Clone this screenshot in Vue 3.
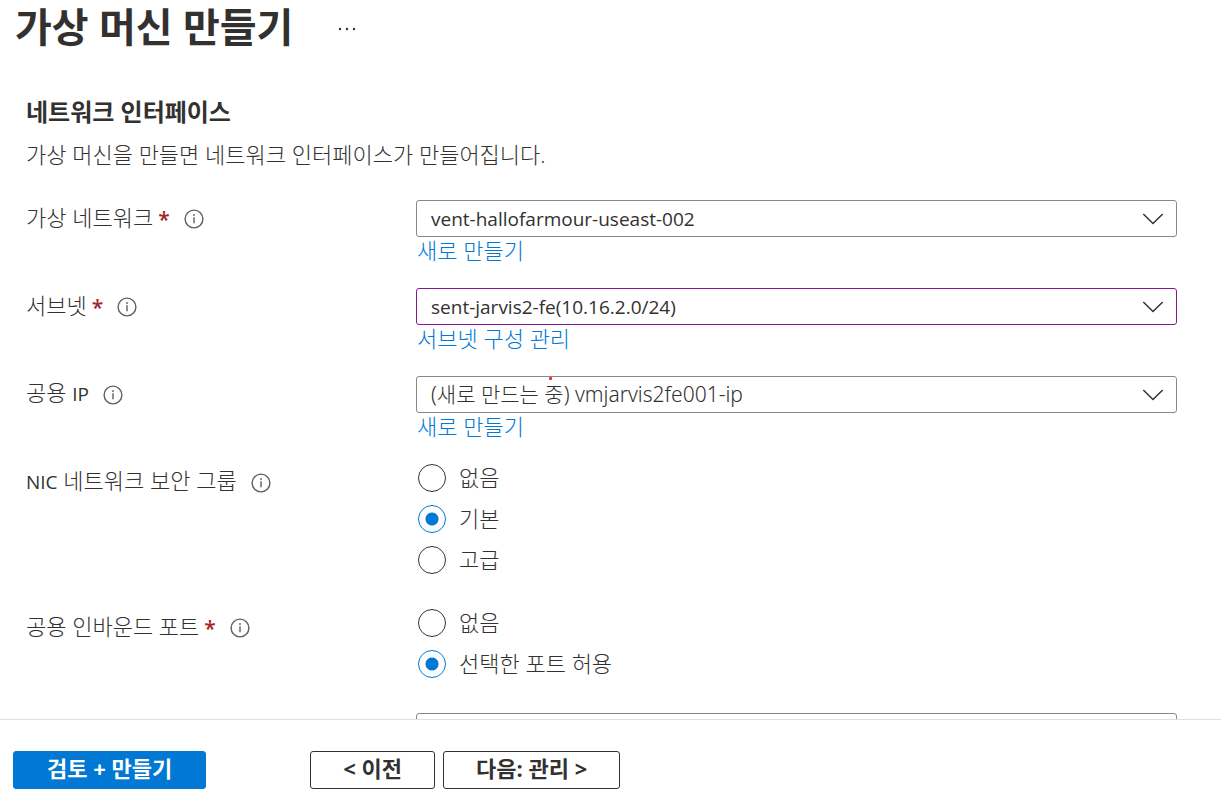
<script setup>
import { ref } from 'vue'

const dropdowns = [
  { id: 'vnet', label: '가상 네트워크', required: true, value: 'vent-hallofarmour-useast-002', link: '새로 만들기' },
  { id: 'subnet', label: '서브넷', required: true, value: 'sent-jarvis2-fe(10.16.2.0/24)', link: '서브넷 구성 관리', edited: true },
  { id: 'public-ip', label: '공용', suffix: 'IP', value: '(새로 만드는 중) vmjarvis2fe001-ip', link: '새로 만들기', marked: true },
]

const radioGroups = ref([
  { id: 'nsg', prefix: 'NIC', label: '네트워크 보안 그룹', options: ['없음', '기본', '고급'], selected: '기본' },
  { id: 'inbound', label: '공용 인바운드 포트', required: true, options: ['없음', '선택한 포트 허용'], selected: '선택한 포트 허용' },
])
</script>

<template>
  <div class="page">
    <header class="title-bar">
      <h1>가상 머신 만들기</h1>
      <button class="more" type="button" aria-label="추가 옵션">
        <svg width="20" height="4" viewBox="0 0 20 4">
          <circle cx="3" cy="2" r="1.2" /><circle cx="10" cy="2" r="1.2" /><circle cx="17" cy="2" r="1.2" />
        </svg>
      </button>
    </header>

    <main class="content">
      <h2>네트워크 인터페이스</h2>
      <p class="intro">가상 머신을 만들면 네트워크 인터페이스가 만들어집니다.</p>

      <form class="form">
        <div v-for="d in dropdowns" :key="d.id" class="row">
          <div class="label">
            <label class="name" :for="d.id">{{ d.label }}<template v-if="d.suffix">&nbsp;<span class="latin">{{ d.suffix }}</span></template></label>
            <span v-if="d.required" class="required">*</span>
            <svg class="info" width="20" height="20" viewBox="0 0 20 20">
              <circle cx="10" cy="10" r="8.9" /><path d="M10 8.3v6" /><circle class="dot" cx="10" cy="6" r="0.9" />
            </svg>
          </div>
          <div class="field">
            <div class="select-box">
              <select :id="d.id" :class="{ edited: d.edited, hangul: d.marked }">
                <option>{{ d.value }}</option>
              </select>
              <svg class="chevron" width="22" height="12" viewBox="0 0 22 12"><path d="M1.3 1L11 10.5L20.7 1" /></svg>
              <span v-if="d.marked" class="mark"></span>
            </div>
            <a href="#">{{ d.link }}</a>
          </div>
        </div>

        <div v-for="g in radioGroups" :key="g.id" class="row group" role="radiogroup" :aria-labelledby="g.id">
          <div class="label">
            <span :id="g.id" class="name"><template v-if="g.prefix"><span class="latin">{{ g.prefix }}</span>&nbsp;</template>{{ g.label }}</span>
            <span v-if="g.required" class="required">*</span>
            <svg class="info" width="20" height="20" viewBox="0 0 20 20">
              <circle cx="10" cy="10" r="8.9" /><path d="M10 8.3v6" /><circle class="dot" cx="10" cy="6" r="0.9" />
            </svg>
          </div>
          <div class="options">
            <label v-for="o in g.options" :key="o" class="option">
              <input v-model="g.selected" type="radio" :name="g.id" :value="o" />
              <span class="name">{{ o }}</span>
            </label>
          </div>
        </div>

        <div class="row">
          <div class="select-box last"><select aria-label="인바운드 포트 선택"></select></div>
        </div>
      </form>
    </main>

    <footer class="footer">
      <button class="btn primary" type="button">검토 + 만들기</button>
      <div class="nav">
        <button class="btn" type="button">&lt; 이전</button>
        <button class="btn" type="button">다음: 관리 &gt;</button>
      </div>
    </footer>
  </div>
</template>

<style>
body {
  margin: 0;
  background: #fff;
}
</style>

<style scoped>
.page {
  display: flex;
  flex-direction: column;
  height: 100vh;
  overflow: hidden;
  color: #323130;
  font-family: "Open Sans", "Noto Sans CJK KR", sans-serif;
  font-size: 22px;
  line-height: 28px;
}
.page * {
  box-sizing: border-box;
}
.title-bar {
  display: flex;
  align-items: center;
  flex: none;
  gap: 44px;
  height: 56px;
  padding-left: 15px;
}
h1 {
  margin: 0;
  padding-bottom: 2px;
  font-size: 40px;
  line-height: 54px;
  font-weight: 700;
}
.more {
  display: flex;
  padding: 2px 0 0;
  border: 0;
  background: none;
  fill: #323130;
}
.content {
  flex: 1;
  min-height: 0;
  overflow: hidden;
  padding: 40px 44px 0 26px;
}
h2 {
  margin: 0;
  font-size: 24px;
  line-height: 32px;
  font-weight: 700;
}
.intro {
  margin: 12px 0 32px;
  font-weight: 300;
}
.form {
  display: flex;
  flex-direction: column;
}
.row {
  display: grid;
  grid-template-columns: 390px 1fr;
  margin-bottom: 23px;
}
.group {
  margin-bottom: 35px;
}
.label {
  display: flex;
  align-items: center;
  height: 37px;
  font-weight: 300;
}
.name {
  padding-bottom: 3px;
}
.latin {
  font-size: 19px;
  font-weight: 400;
}
.required {
  margin-left: 5px;
  color: #a4262c;
  font-size: 21px;
  font-weight: 600;
}
.info {
  margin-left: 14px;
  fill: none;
  stroke: #605e5c;
  stroke-width: 1.4;
}
.info .dot {
  fill: #605e5c;
  stroke: none;
}
.field {
  display: flex;
  flex-direction: column;
  align-items: flex-start;
}
.select-box {
  position: relative;
  width: 100%;
  height: 37px;
}
.last {
  grid-column: 2;
}
select {
  display: block;
  width: 100%;
  height: 37px;
  padding: 0 50px 0 14px;
  border: 1px solid #8a8886;
  border-radius: 3px;
  background: #fff;
  color: #323130;
  font: 400 19px "Open Sans", "Noto Sans CJK KR", sans-serif;
  appearance: none;
}
select.edited {
  border-color: #881798;
}
select.hangul {
  padding-bottom: 2px;
  font-family: "Noto Sans", "Noto Sans CJK KR", sans-serif;
  font-size: 21px;
  font-weight: 300;
}
.chevron {
  position: absolute;
  right: 13px;
  top: 13px;
  fill: none;
  stroke: #323130;
  stroke-width: 1.5;
  pointer-events: none;
}
.mark {
  position: absolute;
  left: 133px;
  top: 1px;
  width: 3px;
  height: 3px;
  border-radius: 1px;
  background: #ff2020;
}
a {
  margin-left: 1px;
  padding-bottom: 2px;
  line-height: 26px;
  color: #0078d4;
  font-weight: 300;
  text-decoration: none;
}
.options {
  display: flex;
  flex-direction: column;
  gap: 13px;
  padding-left: 2px;
}
.option {
  display: flex;
  align-items: center;
  gap: 13px;
  height: 28px;
  font-weight: 300;
}
input {
  flex: none;
  width: 28px;
  height: 28px;
  margin: 0;
  border: 1px solid #323130;
  border-radius: 50%;
  background: #fff;
  appearance: none;
}
input:checked {
  border-color: #0078d4;
  background: radial-gradient(circle, #0078d4 6px, #fff 7px);
}
.footer {
  display: flex;
  flex: none;
  gap: 104px;
  padding: 31px 13px 6px;
  border-top: 1px solid #e1dfdd;
}
.nav {
  display: flex;
  gap: 8px;
}
.btn {
  height: 38px;
  padding: 0 32px 4px;
  border: 1px solid #323130;
  border-radius: 3px;
  background: #fff;
  color: #323130;
  font: 700 22px/28px "Open Sans", "Noto Sans CJK KR", sans-serif;
}
.primary {
  padding: 0 33px 4px;
  border-color: #0078d4;
  background: #0078d4;
  color: #fff;
}
</style>
